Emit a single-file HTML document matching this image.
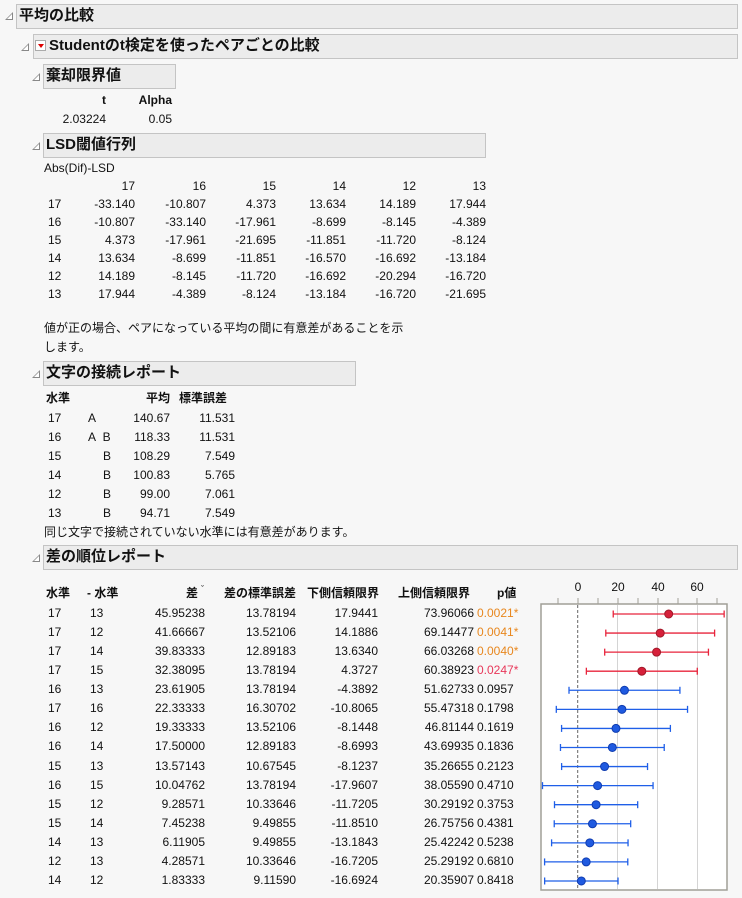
<!DOCTYPE html>
<html><head><meta charset="utf-8"><style>
body{margin:0;width:742px;height:898px;background:#f7f7f7;font-family:"Liberation Sans","Noto Sans CJK JP",sans-serif;font-size:12px;color:#111;position:relative;overflow:hidden}
.c{position:absolute;white-space:nowrap;line-height:18px}
.r{text-align:right;width:100px}
.b{font-weight:bold}
.h{position:absolute;background:#ececec;border:1px solid #c4c4c4;box-sizing:border-box;font-weight:bold;font-size:15px;line-height:22px;padding-left:2px;white-space:nowrap}
.tri{position:absolute;width:0;height:0;border-left:8px solid transparent;border-bottom:8px solid #888}
.tri::after{content:"";position:absolute;left:-6px;top:2px;border-left:5px solid transparent;border-bottom:5px solid #fff}
.or{color:#e8871e}.pk{color:#e8385a}
</style></head><body>
<div class="tri" style="left:5px;top:12px"></div>
<div class="h" style="left:16px;top:4px;width:722px;height:25px">平均の比較</div>
<div class="tri" style="left:21px;top:43px"></div>
<div class="h" style="left:33px;top:34px;width:705px;height:25px;padding-left:15px">Studentのt検定を使ったペアごとの比較</div>
<div style="position:absolute;left:35px;top:40px;width:11px;height:11px;border:1px solid #aaa;background:#fff;box-sizing:border-box"><div style="position:absolute;left:2px;top:3px;border-left:3px solid transparent;border-right:3px solid transparent;border-top:4px solid #d00"></div></div>
<div class="tri" style="left:32px;top:73px"></div>
<div class="h" style="left:43px;top:64px;width:133px;height:25px">棄却限界値</div>
<div class="c b r" style="left:6px;top:91px">t</div><div class="c b r" style="left:72px;top:91px">Alpha</div>
<div class="c r" style="left:6px;top:110px">2.03224</div><div class="c r" style="left:72px;top:110px">0.05</div>
<div class="tri" style="left:32px;top:142px"></div>
<div class="h" style="left:43px;top:133px;width:443px;height:25px">LSD閾値行列</div>
<div class="c" style="left:44px;top:159px">Abs(Dif)-LSD</div>
<div class="c r" style="left:35px;top:177px">17</div><div class="c r" style="left:106px;top:177px">16</div><div class="c r" style="left:176px;top:177px">15</div><div class="c r" style="left:246px;top:177px">14</div><div class="c r" style="left:316px;top:177px">12</div><div class="c r" style="left:386px;top:177px">13</div>
<div class="c" style="left:48px;top:195px">17</div><div class="c r" style="left:35px;top:195px">-33.140</div><div class="c r" style="left:106px;top:195px">-10.807</div><div class="c r" style="left:176px;top:195px">4.373</div><div class="c r" style="left:246px;top:195px">13.634</div><div class="c r" style="left:316px;top:195px">14.189</div><div class="c r" style="left:386px;top:195px">17.944</div>
<div class="c" style="left:48px;top:213px">16</div><div class="c r" style="left:35px;top:213px">-10.807</div><div class="c r" style="left:106px;top:213px">-33.140</div><div class="c r" style="left:176px;top:213px">-17.961</div><div class="c r" style="left:246px;top:213px">-8.699</div><div class="c r" style="left:316px;top:213px">-8.145</div><div class="c r" style="left:386px;top:213px">-4.389</div>
<div class="c" style="left:48px;top:231px">15</div><div class="c r" style="left:35px;top:231px">4.373</div><div class="c r" style="left:106px;top:231px">-17.961</div><div class="c r" style="left:176px;top:231px">-21.695</div><div class="c r" style="left:246px;top:231px">-11.851</div><div class="c r" style="left:316px;top:231px">-11.720</div><div class="c r" style="left:386px;top:231px">-8.124</div>
<div class="c" style="left:48px;top:249px">14</div><div class="c r" style="left:35px;top:249px">13.634</div><div class="c r" style="left:106px;top:249px">-8.699</div><div class="c r" style="left:176px;top:249px">-11.851</div><div class="c r" style="left:246px;top:249px">-16.570</div><div class="c r" style="left:316px;top:249px">-16.692</div><div class="c r" style="left:386px;top:249px">-13.184</div>
<div class="c" style="left:48px;top:267px">12</div><div class="c r" style="left:35px;top:267px">14.189</div><div class="c r" style="left:106px;top:267px">-8.145</div><div class="c r" style="left:176px;top:267px">-11.720</div><div class="c r" style="left:246px;top:267px">-16.692</div><div class="c r" style="left:316px;top:267px">-20.294</div><div class="c r" style="left:386px;top:267px">-16.720</div>
<div class="c" style="left:48px;top:285px">13</div><div class="c r" style="left:35px;top:285px">17.944</div><div class="c r" style="left:106px;top:285px">-4.389</div><div class="c r" style="left:176px;top:285px">-8.124</div><div class="c r" style="left:246px;top:285px">-13.184</div><div class="c r" style="left:316px;top:285px">-16.720</div><div class="c r" style="left:386px;top:285px">-21.695</div>
<div class="c" style="left:44px;top:319px">値が正の場合、ペアになっている平均の間に有意差があることを示</div>
<div class="c" style="left:44px;top:338px">します。</div>
<div class="tri" style="left:32px;top:370px"></div>
<div class="h" style="left:43px;top:361px;width:313px;height:25px">文字の接続レポート</div>
<div class="c b" style="left:46px;top:389px">水準</div><div class="c b r" style="left:70px;top:389px">平均</div><div class="c b r" style="left:127px;top:389px">標準誤差</div>
<div class="c" style="left:48px;top:409px">17</div><div class="c" style="left:88px;top:409px">A</div><div class="c r" style="left:70px;top:409px">140.67</div><div class="c r" style="left:135px;top:409px">11.531</div>
<div class="c" style="left:48px;top:428px">16</div><div class="c" style="left:88px;top:428px">A&nbsp;&nbsp;B</div><div class="c r" style="left:70px;top:428px">118.33</div><div class="c r" style="left:135px;top:428px">11.531</div>
<div class="c" style="left:48px;top:447px">15</div><div class="c" style="left:103px;top:447px">B</div><div class="c r" style="left:70px;top:447px">108.29</div><div class="c r" style="left:135px;top:447px">7.549</div>
<div class="c" style="left:48px;top:466px">14</div><div class="c" style="left:103px;top:466px">B</div><div class="c r" style="left:70px;top:466px">100.83</div><div class="c r" style="left:135px;top:466px">5.765</div>
<div class="c" style="left:48px;top:485px">12</div><div class="c" style="left:103px;top:485px">B</div><div class="c r" style="left:70px;top:485px">99.00</div><div class="c r" style="left:135px;top:485px">7.061</div>
<div class="c" style="left:48px;top:504px">13</div><div class="c" style="left:103px;top:504px">B</div><div class="c r" style="left:70px;top:504px">94.71</div><div class="c r" style="left:135px;top:504px">7.549</div>
<div class="c" style="left:44px;top:523px">同じ文字で接続されていない水準には有意差があります。</div>
<div class="tri" style="left:32px;top:554px"></div>
<div class="h" style="left:43px;top:545px;width:695px;height:25px">差の順位レポート</div>
<div class="c b" style="left:46px;top:584px">水準</div><div class="c b" style="left:87px;top:584px">- 水準</div><div class="c b r" style="left:98px;top:584px">差</div><div class="c" style="left:201px;top:580px;font-size:9px">ˇ</div><div class="c b r" style="left:196px;top:584px">差の標準誤差</div><div class="c b r" style="left:279px;top:584px">下側信頼限界</div><div class="c b r" style="left:370px;top:584px">上側信頼限界</div><div class="c b" style="left:497px;top:584px">p値</div>
<div id="rk"></div>
<svg style="position:absolute;left:0;top:0" width="742" height="898">
<g font-size="12" fill="#111" text-anchor="middle" font-family="Liberation Sans">
<text x="578" y="591">0</text><text x="618" y="591">20</text><text x="658" y="591">40</text><text x="697" y="591">60</text></g>
<rect x="541" y="604" width="186" height="286" fill="#fff" stroke="#a09f97" stroke-width="1.5"/>
<g stroke="#a09f97"><line x1="558" y1="598" x2="558" y2="604"/><line x1="578" y1="598" x2="578" y2="604"/><line x1="598" y1="598" x2="598" y2="604"/><line x1="618" y1="598" x2="618" y2="604"/><line x1="638" y1="598" x2="638" y2="604"/><line x1="658" y1="598" x2="658" y2="604"/><line x1="678" y1="598" x2="678" y2="604"/><line x1="697" y1="598" x2="697" y2="604"/><line x1="717" y1="598" x2="717" y2="604"/></g>
<g stroke="#d4d4d4"><line x1="617.5" y1="605" x2="617.5" y2="889"/><line x1="657.5" y1="605" x2="657.5" y2="889"/><line x1="697.5" y1="605" x2="697.5" y2="889"/></g>
<line x1="577.7" y1="605" x2="577.7" y2="889" stroke="#666" stroke-dasharray="3,2"/>
<g id="pl"></g>
</svg>
<script>
var d=[["17","13","45.95238","13.78194","17.9441","73.96066","0.0021*","or"],["17","12","41.66667","13.52106","14.1886","69.14477","0.0041*","or"],["17","14","39.83333","12.89183","13.6340","66.03268","0.0040*","or"],["17","15","32.38095","13.78194","4.3727","60.38923","0.0247*","pk"],["16","13","23.61905","13.78194","-4.3892","51.62733","0.0957",""],["17","16","22.33333","16.30702","-10.8065","55.47318","0.1798",""],["16","12","19.33333","13.52106","-8.1448","46.81144","0.1619",""],["16","14","17.50000","12.89183","-8.6993","43.69935","0.1836",""],["15","13","13.57143","10.67545","-8.1237","35.26655","0.2123",""],["16","15","10.04762","13.78194","-17.9607","38.05590","0.4710",""],["15","12","9.28571","10.33646","-11.7205","30.29192","0.3753",""],["15","14","7.45238","9.49855","-11.8510","26.75756","0.4381",""],["14","13","6.11905","9.49855","-13.1843","25.42242","0.5238",""],["12","13","4.28571","10.33646","-16.7205","25.29192","0.6810",""],["14","12","1.83333","9.11590","-16.6924","20.35907","0.8418",""]];
var h="",s="";
d.forEach(function(r,i){var y=613+i*19.07,t=y-9;
h+='<div class="c" style="left:48px;top:'+t+'px">'+r[0]+'</div><div class="c" style="left:90px;top:'+t+'px">'+r[1]+'</div><div class="c r" style="left:105px;top:'+t+'px">'+r[2]+'</div><div class="c r" style="left:196px;top:'+t+'px">'+r[3]+'</div><div class="c r" style="left:278px;top:'+t+'px">'+r[4]+'</div><div class="c r" style="left:374px;top:'+t+'px">'+r[5]+'</div><div class="c '+r[7]+'" style="left:477px;top:'+t+'px">'+r[6]+'</div>';
var f=function(v){return Math.min(724.5,Math.max(542.5,577.7+1.98*parseFloat(v)))};
var c=r[7]?"#e8243c":"#1f5fe8",fc=r[7]?"#d6203a":"#1f5ae0",sc=r[7]?"#a01828":"#0f3cb0";
var a=f(r[4]),b=f(r[5]),m=f(r[2]),yy=y+1;
s+='<line x1="'+a+'" y1="'+yy+'" x2="'+b+'" y2="'+yy+'" stroke="'+c+'" stroke-width="1.3"/><line x1="'+a+'" y1="'+(yy-3.5)+'" x2="'+a+'" y2="'+(yy+3.5)+'" stroke="'+c+'" stroke-width="1.3"/><line x1="'+b+'" y1="'+(yy-3.5)+'" x2="'+b+'" y2="'+(yy+3.5)+'" stroke="'+c+'" stroke-width="1.3"/><circle cx="'+m+'" cy="'+yy+'" r="4" fill="'+fc+'" stroke="'+sc+'"/>';});
document.getElementById("rk").innerHTML=h;document.getElementById("pl").innerHTML=s;
</script>
</body></html>
